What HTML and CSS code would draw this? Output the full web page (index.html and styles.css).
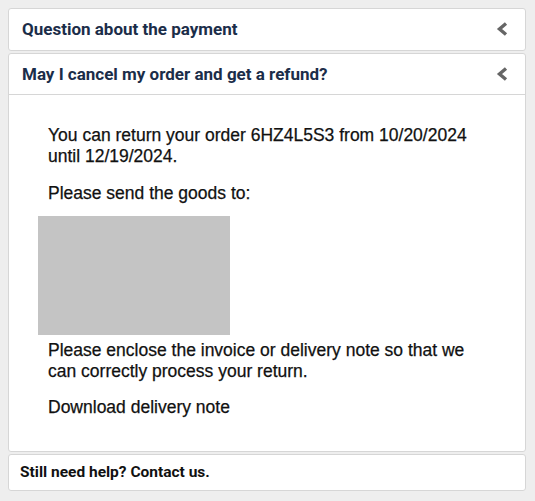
FILE: index.html
```html
<!DOCTYPE html>
<html>
<head>
<meta charset="utf-8">
<link rel="stylesheet" href="styles.css">
</head>
<body>
<div class="accordion">
  <div class="card">
    <div class="head">
      <span class="title">Question about the payment</span>
      <svg class="chev" width="12" height="14" viewBox="0 0 12 14"><path d="M10 1.5 L3.5 7 L10 12.5" fill="none" stroke="#666" stroke-width="3.4"/></svg>
    </div>
  </div>
  <div class="card">
    <div class="head open">
      <span class="title">May I cancel my order and get a refund?</span>
      <svg class="chev" width="12" height="14" viewBox="0 0 12 14"><path d="M10 1.5 L3.5 7 L10 12.5" fill="none" stroke="#666" stroke-width="3.4"/></svg>
    </div>
    <div class="body">
      <p>You can return your order 6HZ4L5S3 from 10/20/2024 until 12/19/2024.</p>
      <p>Please send the goods to:</p>
      <div class="address"></div>
      <p class="after">Please enclose the invoice or delivery note so that we can correctly process your return.</p>
      <p>Download delivery note</p>
    </div>
  </div>
  <div class="card">
    <div class="foot">Still need help? Contact us.</div>
  </div>
</div>
</body>
</html>
```
FILE: styles.css
```css
html, body {
  background: #eeeeee;
}
body {
  margin: 8px 9px 8px 8px;
  font-family: Roboto, "Liberation Sans", sans-serif;
}
.accordion {
  display: flex;
  flex-direction: column;
  gap: 2px;
}
.card {
  background: #fff;
  border: 1px solid #d6d6d6;
  border-radius: 3px;
}
.head {
  display: flex;
  align-items: center;
  justify-content: space-between;
  padding: 10px 17px 11px 13px;
}
.head.open {
  padding-bottom: 10px;
  border-bottom: 1px solid #d6d6d6;
}
.title {
  font-size: 17px;
  font-weight: 700;
  line-height: 20px;
  color: #1b2d49;
}
.chev {
  display: block;
}
.body {
  padding: 30px 29px 33px 29px;
  font-family: "Liberation Sans", Arial, sans-serif;
  font-size: 17.5px;
  line-height: 21px;
  color: #111;
  -webkit-text-stroke: 0.25px #111;
}
.body p {
  margin: 0 0 16px 10px;
}
.body p:last-child {
  margin-bottom: 0;
}
.address {
  width: 192px;
  height: 119px;
  background: #c4c4c4;
  margin: -4px 0 5px 0;
}
.after {
  margin-bottom: 15px !important;
}
.foot {
  padding: 8px 11px 9px;
  font-size: 15.5px;
  font-weight: 700;
  line-height: 18px;
  color: #111;
}
```
